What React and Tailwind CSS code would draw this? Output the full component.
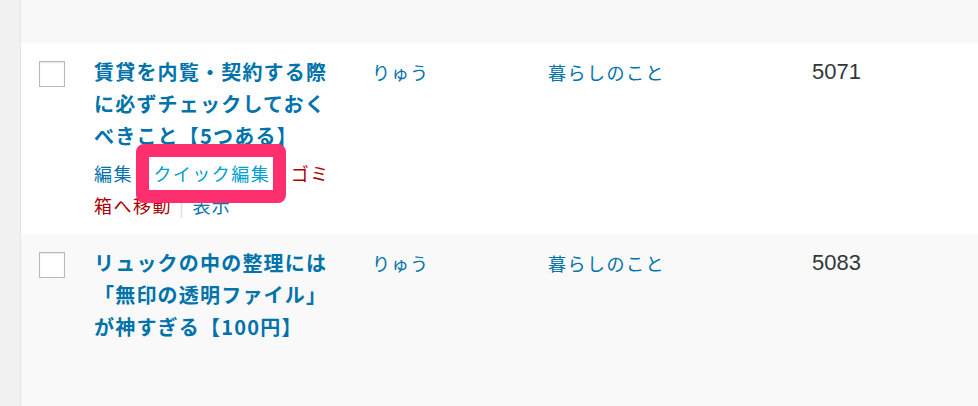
import React from "react";

const jp = { fontFamily: '"Noto Sans CJK JP", "Noto Sans", sans-serif' };

const posts = [
  {
    id: 1,
    lines: ["賃貸を内覧・契約する際", "に必ずチェックしておく", "べきこと【5つある】"],
    author: "りゅう",
    category: "暮らしのこと",
    views: "5071",
    actions: true,
  },
  {
    id: 2,
    lines: ["リュックの中の整理には", "「無印の透明ファイル」", "が神すぎる【100円】"],
    author: "りゅう",
    category: "暮らしのこと",
    views: "5083",
    actions: false,
  },
];

const Sep = () => <span className="mx-[7px] text-[#dddddd]">|</span>;

const RowActions = () => (
  <div className="text-[18px] leading-[32px] tracking-[1.5px]">
    <div className="flex items-center">
      <span className="text-[#0073aa]">編集</span>
      <Sep />
      <span className="relative inline-block">
        <span className="absolute -left-[17px] -right-[16px] -top-[13px] -bottom-[14px] rounded-lg border-[13px] border-[#fd2f6e] bg-white" />
        <span className="relative text-[#00a0d2]">クイック編集</span>
      </span>
      <Sep />
      <span className="text-[#aa0000]">ゴミ</span>
    </div>
    <div className="flex items-center">
      <span className="text-[#aa0000]">箱へ移動</span>
      <Sep />
      <span className="text-[#0073aa]">表示</span>
    </div>
  </div>
);

const Row = ({ post, bg }) => (
  <div
    className={`grid grid-cols-[73px_278px_176px_264px_1fr] ${bg} pt-[13px]`}
    style={jp}
  >
    <div className="pl-[18px] pt-[5px]">
      <div className="h-[26px] w-[26px] border border-[#b4b9be] bg-white shadow-[inset_0_1px_2px_rgba(0,0,0,0.1)]" />
    </div>
    <div>
      <div className="text-[20px] font-bold leading-[32px] tracking-[1.2px] text-[#0073aa]">
        {post.lines.map((l) => (
          <div key={l}>{l}</div>
        ))}
      </div>
      {post.actions && <div className="relative z-10 mt-[5px]"><RowActions /></div>}
    </div>
    <div className="text-[18px] leading-[32px] tracking-[1px] text-[#0073aa]">{post.author}</div>
    <div className="text-[18px] leading-[32px] tracking-[1.5px] text-[#0073aa]">{post.category}</div>
    <div
      className="text-[22px] leading-[32px] text-[#32373c]"
      style={{ fontFamily: '"Liberation Sans", Arial, sans-serif' }}
    >
      {post.views}
    </div>
  </div>
);

export default function App() {
  return (
    <div className="flex h-[406px] w-[978px] overflow-hidden">
      <div className="w-[21px] bg-[#f1f1f1] border-r border-[#e5e5e5]" />
      <div className="flex flex-1 flex-col">
        <div className="h-[43px] bg-[#f8f8f8]" />
        <div className="h-[191px] bg-white">
          <Row post={posts[0]} bg="bg-white" />
        </div>
        <div className="flex-1 bg-[#f9f9f9]">
          <Row post={posts[1]} bg="bg-[#f9f9f9]" />
        </div>
      </div>
    </div>
  );
}
